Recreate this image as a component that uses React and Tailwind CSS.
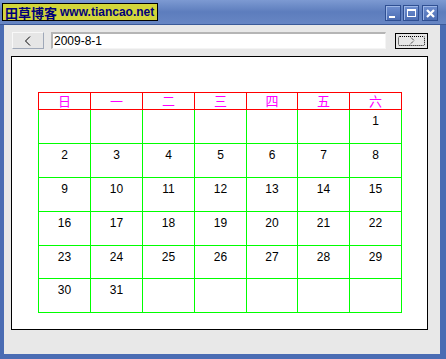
import React from "react";

const weekDays = ["日", "一", "二", "三", "四", "五", "六"];
const colWidths = ["w-[52px]", "w-[52px]", "w-[52px]", "w-[52px]", "w-[51px]", "w-[52px]", "w-[52px]"];
const rowHeights = ["h-[34px]", "h-[34px]", "h-[34px]", "h-[34px]", "h-[33px]", "h-[34px]"];

// August 2009 starts on a Saturday
const weeks = [
  ["", "", "", "", "", "", "1"],
  ["2", "3", "4", "5", "6", "7", "8"],
  ["9", "10", "11", "12", "13", "14", "15"],
  ["16", "17", "18", "19", "20", "21", "22"],
  ["23", "24", "25", "26", "27", "28", "29"],
  ["30", "31", "", "", "", "", ""],
];

function TitleButton({ children }) {
  return (
    <div className="w-[16px] h-[16px] bg-gradient-to-b from-[#6f8fd0] to-[#4c6db3] border border-[#2f4f92] shadow-[inset_1px_1px_0_#9db6e6] flex items-center justify-center">
      {children}
    </div>
  );
}

export default function App() {
  return (
    <div className="w-[446px] h-[359px] bg-[#4a6cb3] flex flex-col font-['Liberation_Sans','Noto_Sans_CJK_SC',sans-serif]">
      {/* Title bar */}
      <div className="h-[25px] flex items-start pt-[3px] pl-[2px] pr-[8px] bg-gradient-to-b from-[#7d9ad2] via-[#5d7dbd] to-[#6786c4] border-b border-[#3b5a98]">
        <div className="w-[156px] h-[18px] bg-[#d2d63a] border border-black flex items-center pl-[2px] gap-[3px] text-[#00007a] font-bold leading-none whitespace-nowrap overflow-hidden">
          <span className="text-[13px] font-['Noto_Sans_CJK_SC',sans-serif]">田草博客</span>
          <span className="text-[12px]">www.tiancao.net</span>
        </div>
        <div className="ml-auto mt-[2px] flex gap-[2px]">
          <TitleButton>
            <div className="w-[6px] h-[2px] bg-white mt-[7px] -ml-[2px]"></div>
          </TitleButton>
          <TitleButton>
            <div className="w-[9px] h-[8px] border border-white border-t-[2px]"></div>
          </TitleButton>
          <div className="ml-[1px]">
            <TitleButton>
              <svg width="9" height="9" viewBox="0 0 9 9">
                <path d="M1 1 L8 8 M8 1 L1 8" stroke="white" strokeWidth="2.2" />
              </svg>
            </TitleButton>
          </div>
        </div>
      </div>

      {/* Client area */}
      <div className="flex-1 ml-[4px] mr-[6px] mb-[5px] bg-[#e8e8e8] flex flex-col">
        {/* Toolbar */}
        <div className="flex items-center pt-[7px] pl-[8px]">
          <button className="w-[32px] h-[17px] bg-[#e6e6e6] border border-[#f8f8f8] border-r-[#9fa8b8] border-b-[#9fa8b8] flex items-center justify-center">
            <svg width="8" height="10" viewBox="0 0 8 10">
              <path d="M6 0.5 L1.5 5 L6 9.5" stroke="black" strokeWidth="1" fill="none" />
            </svg>
          </button>
          <div className="ml-[7px] w-[335px] h-[17px] bg-white border-t-2 border-l-2 border-[#b5b5b5] border-r border-b border-r-[#f4f4f4] border-b-[#f4f4f4] flex items-center pl-[1px] text-[12px] leading-none text-black">
            2009-8-1
          </div>
          <button className="ml-[9px] w-[33px] h-[16px] bg-[#e6e6e6] border border-black p-[2px] flex">
            <div className="flex-1 border border-dotted border-black rounded-[2px] flex items-center justify-center">
              <svg width="8" height="9" viewBox="0 0 8 9">
                <path d="M2 0.5 L6 4.5 L2 8.5" stroke="black" strokeWidth="1" fill="none" strokeDasharray="1 1" />
              </svg>
            </div>
          </button>
        </div>

        {/* Calendar panel */}
        <div className="ml-[7px] mt-[7px] w-[417px] h-[274px] bg-white border border-black pt-[35px] pl-[26px]">
          <div className="flex flex-col w-[364px] text-[12px] leading-none">
            {/* Week header */}
            <div className="flex border-t border-l border-[#ff0000] w-fit">
              {weekDays.map((d, i) => (
                <div
                  key={d}
                  className={`${colWidths[i]} h-[17px] border-r border-b border-[#ff0000] text-[#ff00ff] text-[13px] flex items-center justify-center`}
                >
                  {d}
                </div>
              ))}
            </div>
            {/* Days */}
            <div className="flex flex-col border-l border-[#00ff00] w-fit">
              {weeks.map((week, wi) => (
                <div key={wi} className="flex">
                  {week.map((day, di) => (
                    <div
                      key={di}
                      className={`${colWidths[di]} ${rowHeights[wi]} border-r border-b border-[#00ff00] text-center pt-[5px] text-black`}
                    >
                      {day}
                    </div>
                  ))}
                </div>
              ))}
            </div>
          </div>
        </div>
      </div>
    </div>
  );
}
